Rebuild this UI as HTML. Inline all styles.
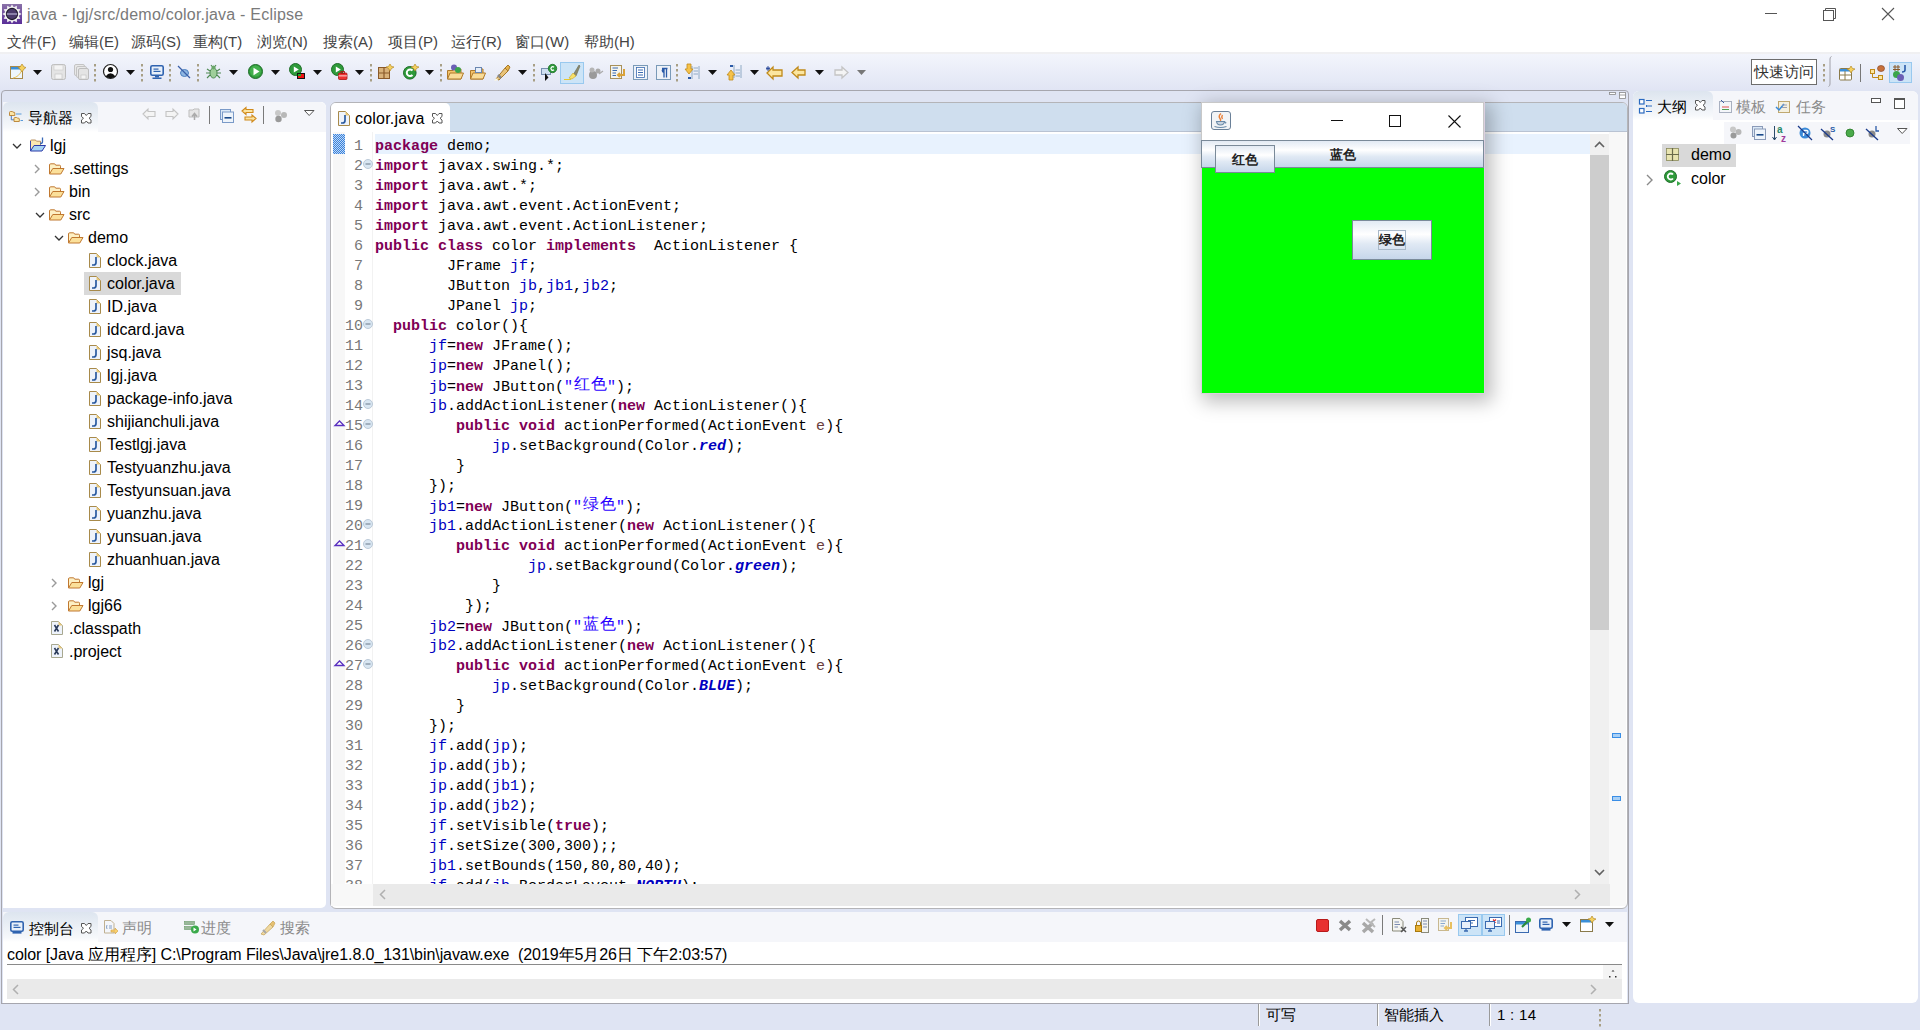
<!DOCTYPE html><html><head><meta charset="utf-8"><style>
*{margin:0;padding:0;box-sizing:border-box}
html,body{width:1920px;height:1030px;overflow:hidden;background:#dfe4f3;font-family:"Liberation Sans",sans-serif;font-size:15px;color:#000}
.a{position:absolute}
.t{position:absolute;white-space:pre;line-height:20px;letter-spacing:0;font-size:16px}
svg{position:absolute;overflow:visible}
.code{font-family:"Liberation Mono",monospace;font-size:15px;letter-spacing:0px;line-height:20px;white-space:pre;position:absolute;left:375px}
.k{color:#7f0055;font-weight:bold}
.f{color:#0000c0}
.s{color:#2a00ff}
.sf{color:#0000c0;font-weight:bold;font-style:italic}
.p{color:#6a3e3e}
.ln{color:#787878;font-family:"Liberation Sans",sans-serif;font-size:15px;line-height:20px;position:absolute;text-align:right;width:40px;left:322px}
</style></head><body>
<div class="a" style="left:0px;top:0px;width:1920px;height:28px;background:#fff"></div>
<svg style="left:2px;top:4px" width="20" height="20" viewBox="0 0 20 20"><defs><linearGradient id="eg" x1="0" y1="0" x2="0" y2="1"><stop offset="0" stop-color="#8a72a8"/><stop offset="1" stop-color="#5a2e98"/></linearGradient></defs><rect width="20" height="20" fill="url(#eg)"/><polygon points="10.00,0.40 11.81,3.24 14.80,1.69 14.95,5.05 18.31,5.20 16.76,8.19 19.60,10.00 16.76,11.81 18.31,14.80 14.95,14.95 14.80,18.31 11.81,16.76 10.00,19.60 8.19,16.76 5.20,18.31 5.05,14.95 1.69,14.80 3.24,11.81 0.40,10.00 3.24,8.19 1.69,5.20 5.05,5.05 5.20,1.69 8.19,3.24" fill="#f2f2f2"/><circle cx="10" cy="10" r="5.6" fill="#4a3a6a" stroke="#1e1a2a" stroke-width="1.1"/><rect x="4.8" y="9" width="10.4" height="2" fill="#8a80a8"/></svg>
<div class="t" style="left:27px;top:5px;color:#7a7a7a;font-size:16px;letter-spacing:0.22px">java - lgj/src/demo/color.java - Eclipse</div>
<div class="a" style="left:1765px;top:13px;width:12px;height:1px;background:#555"></div>
<svg style="left:1823px;top:8px" width="13" height="13" viewBox="0 0 13 13"><rect x="0.5" y="2.5" width="10" height="10" fill="none" stroke="#555"/><path d="M2.5 2.5V0.5H12.5V10.5H10.5" fill="none" stroke="#555"/></svg>
<svg style="left:1882px;top:8px" width="13" height="13" viewBox="0 0 13 13"><path d="M0 0L12 12M12 0L0 12" stroke="#555" stroke-width="1.1"/></svg>
<div class="a" style="left:0px;top:28px;width:1920px;height:24px;background:#fff"></div>
<div class="t" style="left:7px;top:32px;font-size:15px;letter-spacing:0px;color:#444">文件(F)</div>
<div class="t" style="left:69px;top:32px;font-size:15px;letter-spacing:0px;color:#444">编辑(E)</div>
<div class="t" style="left:131px;top:32px;font-size:15px;letter-spacing:0px;color:#444">源码(S)</div>
<div class="t" style="left:193px;top:32px;font-size:15px;letter-spacing:0px;color:#444">重构(T)</div>
<div class="t" style="left:257px;top:32px;font-size:15px;letter-spacing:0px;color:#444">浏览(N)</div>
<div class="t" style="left:323px;top:32px;font-size:15px;letter-spacing:0px;color:#444">搜索(A)</div>
<div class="t" style="left:388px;top:32px;font-size:15px;letter-spacing:0px;color:#444">项目(P)</div>
<div class="t" style="left:451px;top:32px;font-size:15px;letter-spacing:0px;color:#444">运行(R)</div>
<div class="t" style="left:515px;top:32px;font-size:15px;letter-spacing:0px;color:#444">窗口(W)</div>
<div class="t" style="left:584px;top:32px;font-size:15px;letter-spacing:0px;color:#444">帮助(H)</div>
<div class="a" style="left:0px;top:52px;width:1920px;height:2px;background:#f0f0f2"></div>
<div class="a" style="left:0px;top:54px;width:1920px;height:36px;background:linear-gradient(#f3f5fc,#e1e5f4)"></div>
<svg style="left:10px;top:64px" width="16" height="16" viewBox="0 0 16 16"><rect x="0.5" y="2.5" width="12" height="12" fill="#eef6fc" stroke="#a88a4a"/><rect x="1" y="3" width="11" height="2.5" fill="#3b8fd8"/><path d="M3 14 Q9 13 12 6" stroke="#e8c25a" fill="none"/><path d="M12 0 L14 3 L16 3.5 L14 5 L12 8 L10 5 L8 3.5 L10 3Z" fill="#f6d15e" stroke="#b68b2a" stroke-width="0.7"/></svg>
<svg style="left:33px;top:70px" width="10" height="6" viewBox="0 0 10 6"><path d="M0 0H9L4.5 5Z" fill="#111"/></svg>
<svg style="left:51px;top:64px" width="15" height="16" viewBox="0 0 15 16"><rect x="0.5" y="0.5" width="14" height="15" rx="2" fill="#e4e4e4" stroke="#bdbdbd"/><rect x="3" y="1" width="9" height="5" fill="#f4f4f4" stroke="#c8c8c8" stroke-width="0.6"/><rect x="4" y="10" width="7" height="5" fill="#f4f4f4" stroke="#c0c0c0" stroke-width="0.6"/></svg>
<svg style="left:74px;top:64px" width="15" height="16" viewBox="0 0 15 16"><rect x="0.5" y="0.5" width="10" height="11" rx="1.5" fill="#e8e8e8" stroke="#c4c4c4"/><rect x="2.5" y="2.5" width="10" height="11" rx="1.5" fill="#e8e8e8" stroke="#c4c4c4"/><rect x="4.5" y="4.5" width="10" height="11" rx="1.5" fill="#e4e4e4" stroke="#bdbdbd"/><rect x="7" y="11" width="5" height="4" fill="#f4f4f4" stroke="#c0c0c0" stroke-width="0.6"/></svg>
<svg style="left:94px;top:64px" width="3" height="20" viewBox="0 0 3 20"><rect x="0" y="0" width="2" height="2.5" fill="#a89f85"/><rect x="0" y="5" width="2" height="2.5" fill="#a89f85"/><rect x="0" y="10" width="2" height="2.5" fill="#a89f85"/><rect x="0" y="15" width="2" height="2.5" fill="#a89f85"/></svg>
<svg style="left:103px;top:64px" width="15" height="15" viewBox="0 0 15 15"><circle cx="7.5" cy="7.5" r="7" fill="#fff" stroke="#222" stroke-width="1.2"/><circle cx="7.5" cy="5.5" r="2.6" fill="#111"/><path d="M2.5 12.5 Q7.5 6 12.5 12.5 Q7.5 16 2.5 12.5Z" fill="#111"/></svg>
<svg style="left:126px;top:70px" width="10" height="6" viewBox="0 0 10 6"><path d="M0 0H9L4.5 5Z" fill="#111"/></svg>
<svg style="left:141px;top:64px" width="3" height="20" viewBox="0 0 3 20"><rect x="0" y="0" width="2" height="2.5" fill="#a89f85"/><rect x="0" y="5" width="2" height="2.5" fill="#a89f85"/><rect x="0" y="10" width="2" height="2.5" fill="#a89f85"/><rect x="0" y="15" width="2" height="2.5" fill="#a89f85"/></svg>
<svg style="left:150px;top:65px" width="14" height="14" viewBox="0 0 14 14"><rect x="0.8" y="0.8" width="12.4" height="9.4" rx="1.5" fill="#e8f0fa" stroke="#2f63b0" stroke-width="1.6"/><rect x="3.5" y="3.5" width="5" height="1.2" fill="#2f63b0"/><rect x="3.5" y="5.8" width="7" height="1.2" fill="#2f63b0"/><rect x="5" y="11" width="4" height="1.5" fill="#2f63b0"/><rect x="2.5" y="12.5" width="9" height="1.5" fill="#2f63b0"/></svg>
<svg style="left:169px;top:64px" width="3" height="20" viewBox="0 0 3 20"><rect x="0" y="0" width="2" height="2.5" fill="#a89f85"/><rect x="0" y="5" width="2" height="2.5" fill="#a89f85"/><rect x="0" y="10" width="2" height="2.5" fill="#a89f85"/><rect x="0" y="15" width="2" height="2.5" fill="#a89f85"/></svg>
<svg style="left:178px;top:66px" width="13" height="13" viewBox="0 0 13 13"><ellipse cx="6.5" cy="7" rx="4" ry="3.5" fill="#8fb7e2" stroke="#4a7fbf"/><path d="M0 0L12 12" stroke="#3a5fa8" stroke-width="1.3"/></svg>
<svg style="left:197px;top:64px" width="3" height="20" viewBox="0 0 3 20"><rect x="0" y="0" width="2" height="2.5" fill="#a89f85"/><rect x="0" y="5" width="2" height="2.5" fill="#a89f85"/><rect x="0" y="10" width="2" height="2.5" fill="#a89f85"/><rect x="0" y="15" width="2" height="2.5" fill="#a89f85"/></svg>
<svg style="left:206px;top:64px" width="15" height="16" viewBox="0 0 15 16"><ellipse cx="7.5" cy="9" rx="3.5" ry="5" fill="#9fcf9a" stroke="#4e8a52"/><circle cx="7.5" cy="3.5" r="2" fill="#6aa86a"/><path d="M1 5L4 7M14 5L11 7M0 9H4M15 9H11M1 14L4 11M14 14L11 11M5 1L6 2.5M10 1L9 2.5" stroke="#4e8a52" stroke-width="1.1"/></svg>
<svg style="left:229px;top:70px" width="10" height="6" viewBox="0 0 10 6"><path d="M0 0H9L4.5 5Z" fill="#111"/></svg>
<svg style="left:248px;top:64px" width="15" height="15" viewBox="0 0 15 15"><circle cx="7.5" cy="7.5" r="7" fill="#2e9a3a" stroke="#1e6e28"/><circle cx="7.5" cy="7" r="5.5" fill="#43b04d"/><path d="M5.5 3.8V11.2L11.5 7.5Z" fill="#fff"/></svg>
<svg style="left:271px;top:70px" width="10" height="6" viewBox="0 0 10 6"><path d="M0 0H9L4.5 5Z" fill="#111"/></svg>
<svg style="left:289px;top:63px" width="17" height="17" viewBox="0 0 17 17"><circle cx="6.5" cy="6.5" r="6" fill="#2e9a3a" stroke="#1e6e28"/><path d="M4.8 3.5V9.5L9.8 6.5Z" fill="#fff"/><rect x="8" y="10" width="8" height="6" fill="#111"/><rect x="9" y="11" width="6" height="4" fill="#e11"/><rect x="9" y="11" width="3" height="2" fill="#2a2"/></svg>
<svg style="left:313px;top:70px" width="10" height="6" viewBox="0 0 10 6"><path d="M0 0H9L4.5 5Z" fill="#111"/></svg>
<svg style="left:331px;top:63px" width="17" height="17" viewBox="0 0 17 17"><circle cx="6.5" cy="6.5" r="6" fill="#2e9a3a" stroke="#1e6e28"/><path d="M4.8 3.5V9.5L9.8 6.5Z" fill="#fff"/><rect x="7.5" y="10" width="8.5" height="6.5" rx="1" fill="#e33" stroke="#a11" stroke-width="0.8"/><rect x="10" y="8.5" width="3.5" height="2" fill="none" stroke="#a11" stroke-width="0.8"/><rect x="7.5" y="12.5" width="8.5" height="0.8" fill="#fff"/></svg>
<svg style="left:355px;top:70px" width="10" height="6" viewBox="0 0 10 6"><path d="M0 0H9L4.5 5Z" fill="#111"/></svg>
<svg style="left:370px;top:64px" width="3" height="20" viewBox="0 0 3 20"><rect x="0" y="0" width="2" height="2.5" fill="#a89f85"/><rect x="0" y="5" width="2" height="2.5" fill="#a89f85"/><rect x="0" y="10" width="2" height="2.5" fill="#a89f85"/><rect x="0" y="15" width="2" height="2.5" fill="#a89f85"/></svg>
<svg style="left:378px;top:64px" width="16" height="16" viewBox="0 0 16 16"><rect x="0.5" y="3.5" width="11" height="11" fill="#d9b27a" stroke="#8a5a2a"/><path d="M6 3V15M0 9H12" stroke="#8a5a2a" stroke-width="1.2"/><path d="M12 0 L13.5 2.5 L16 3 L13.5 4.5 L12 7 L10.5 4.5 L8 3 L10.5 2.5Z" fill="#f6d15e" stroke="#b68b2a" stroke-width="0.7"/></svg>
<svg style="left:403px;top:64px" width="16" height="16" viewBox="0 0 16 16"><circle cx="6.8" cy="8.8" r="6.3" fill="#2e9a3a" stroke="#1e6e28"/><path d="M9.5 6.5 A3.3 3.3 0 1 0 9.5 11" stroke="#fff" stroke-width="2" fill="none"/><path d="M12 0 L13.5 2.5 L16 3 L13.5 4.5 L12 7 L10.5 4.5 L8 3 L10.5 2.5Z" fill="#f6d15e" stroke="#b68b2a" stroke-width="0.7"/></svg>
<svg style="left:425px;top:70px" width="10" height="6" viewBox="0 0 10 6"><path d="M0 0H9L4.5 5Z" fill="#111"/></svg>
<svg style="left:440px;top:64px" width="3" height="20" viewBox="0 0 3 20"><rect x="0" y="0" width="2" height="2.5" fill="#a89f85"/><rect x="0" y="5" width="2" height="2.5" fill="#a89f85"/><rect x="0" y="10" width="2" height="2.5" fill="#a89f85"/><rect x="0" y="15" width="2" height="2.5" fill="#a89f85"/></svg>
<svg style="left:447px;top:64px" width="17" height="16" viewBox="0 0 17 16"><path d="M0.5 6.5H6L7 5H14V15H0.5Z" fill="#f3c36b" stroke="#b07a2a"/><path d="M0.5 15L3 9H16.5L14 15Z" fill="#f9dc98" stroke="#b07a2a"/><circle cx="7" cy="3.5" r="3" fill="#6b5fb5"/><circle cx="11" cy="6" r="3" fill="#3aa54a"/></svg>
<svg style="left:470px;top:65px" width="16" height="15" viewBox="0 0 16 15"><path d="M0.5 5.5H5L6 4H13V14H0.5Z" fill="#f3c36b" stroke="#b07a2a"/><path d="M0.5 14L3 8H15.5L13 14Z" fill="#f9dc98" stroke="#b07a2a"/><rect x="5.5" y="2.5" width="6" height="5" fill="#e6eef8" stroke="#6a86b0"/></svg>
<svg style="left:494px;top:64px" width="17" height="17" viewBox="0 0 17 17"><path d="M2 15 L11 4 L14 7 L5 16Z" fill="#e9c47a" stroke="#a77a2a"/><path d="M11 4L14 1L16 3L14 7Z" fill="#e6b24a" stroke="#a77a2a"/><path d="M4 11L7 14" stroke="#888" stroke-width="2.5"/><path d="M0 17L3 14L4 16Z" fill="#fffbe0"/></svg>
<svg style="left:518px;top:70px" width="10" height="6" viewBox="0 0 10 6"><path d="M0 0H9L4.5 5Z" fill="#111"/></svg>
<svg style="left:533px;top:64px" width="3" height="20" viewBox="0 0 3 20"><rect x="0" y="0" width="2" height="2.5" fill="#a89f85"/><rect x="0" y="5" width="2" height="2.5" fill="#a89f85"/><rect x="0" y="10" width="2" height="2.5" fill="#a89f85"/><rect x="0" y="15" width="2" height="2.5" fill="#a89f85"/></svg>
<svg style="left:541px;top:64px" width="16" height="17" viewBox="0 0 16 17"><rect x="0.5" y="4.5" width="9" height="6" fill="#cfdff0" stroke="#7890b0"/><path d="M4 9V17L7.5 13.5Z" fill="#111"/><circle cx="11.5" cy="4.5" r="4.2" fill="#2e9a3a" stroke="#1e6e28" stroke-width="0.8"/><path d="M13 3.2A1.8 1.8 0 1 0 13 5.8" stroke="#fff" stroke-width="1.2" fill="none"/></svg>
<div class="a" style="left:560px;top:62px;width:24px;height:22px;background:#cce4f7;border:1px solid #99c9ef"></div>
<svg style="left:564px;top:64px" width="16" height="16" viewBox="0 0 16 16"><path d="M9 11L15 1L16 2L12 12Z" fill="#8a8a70" stroke="#6b6b50" stroke-width="0.6"/><path d="M5 14L9 9L12 12L8 15Z" fill="#f6e06a" stroke="#c9a82a" stroke-width="0.6"/><path d="M0 15.5H7" stroke="#e8c82a" stroke-width="1"/></svg>
<svg style="left:588px;top:66px" width="16" height="13" viewBox="0 0 16 13"><circle cx="5" cy="9" r="4" fill="#9a9a9a"/><circle cx="4" cy="4" r="2.5" fill="#b5b5b5"/><circle cx="10" cy="5" r="2.5" fill="#aaa"/><path d="M11 8L15 5" stroke="#aaa" stroke-width="1.2"/></svg>
<svg style="left:610px;top:64px" width="16" height="16" viewBox="0 0 16 16"><rect x="0.5" y="1.5" width="11" height="13" fill="#f4f4ee" stroke="#a8905a"/><path d="M2.5 4H8M2.5 6.5H7M2.5 9H6M2.5 11.5H6" stroke="#3a6ab0"/><path d="M14 5V11H8M10 9L8 11L10 13" stroke="#d9a23a" stroke-width="2" fill="none"/></svg>
<svg style="left:633px;top:65px" width="15" height="15" viewBox="0 0 15 15"><rect x="0.5" y="0.5" width="14" height="14" fill="#eef2f8" stroke="#7a9ab8"/><rect x="3.5" y="2.5" width="8" height="10" fill="#fff" stroke="#3a6ab0" stroke-width="0.8"/><path d="M5 5H10M5 7.5H10M5 10H10" stroke="#3a6ab0"/></svg>
<svg style="left:656px;top:65px" width="15" height="15" viewBox="0 0 15 15"><rect x="0.5" y="0.5" width="14" height="14" fill="#eef2f8" stroke="#7a9ab8"/><path d="M8 3.5V12.5M10.5 3.5V12.5M6 3.5H11.5" stroke="#2a5aa8" stroke-width="1.3" fill="none"/><path d="M8 3.2A2.4 2.4 0 0 0 8 8Z" fill="#2a5aa8"/></svg>
<svg style="left:676px;top:64px" width="3" height="20" viewBox="0 0 3 20"><rect x="0" y="0" width="2" height="2.5" fill="#a89f85"/><rect x="0" y="5" width="2" height="2.5" fill="#a89f85"/><rect x="0" y="10" width="2" height="2.5" fill="#a89f85"/><rect x="0" y="15" width="2" height="2.5" fill="#a89f85"/></svg>
<svg style="left:685px;top:64px" width="15" height="16" viewBox="0 0 15 16"><path d="M7 2V15M14 2V15" stroke="#7a9ab8" stroke-width="0.8"/><path d="M8.5 4H13M8.5 7H13M8.5 10H13" stroke="#7a9ab8" stroke-width="0.8"/><rect x="3" y="13" width="3" height="2" fill="#2a5aa8"/><path d="M2 0H6V5H8L4 10L0 5H2Z" fill="#f6c24a" stroke="#c08a1a" stroke-width="0.8"/></svg>
<svg style="left:708px;top:70px" width="10" height="6" viewBox="0 0 10 6"><path d="M0 0H9L4.5 5Z" fill="#111"/></svg>
<svg style="left:727px;top:64px" width="15" height="16" viewBox="0 0 15 16"><path d="M7 1V14M14 1V14" stroke="#7a9ab8" stroke-width="0.8"/><path d="M8.5 6H13M8.5 9H13M8.5 12H13" stroke="#7a9ab8" stroke-width="0.8"/><rect x="3" y="1" width="3" height="2" fill="#2a5aa8"/><path d="M2 16H6V11H8L4 6L0 11H2Z" fill="#f6c24a" stroke="#c08a1a" stroke-width="0.8"/></svg>
<svg style="left:750px;top:70px" width="10" height="6" viewBox="0 0 10 6"><path d="M0 0H9L4.5 5Z" fill="#111"/></svg>
<svg style="left:766px;top:66px" width="17" height="13" viewBox="0 0 17 13"><path d="M1 7L7 1V4H16V10H7V13Z" fill="#fbe6a0" stroke="#c08a1a" stroke-width="1.3"/><path d="M2 0L2 5M0 2.5H4M0.5 1L3.5 4M3.5 1L0.5 4" stroke="#2a4a9a" stroke-width="0.9"/></svg>
<svg style="left:791px;top:66px" width="15" height="13" viewBox="0 0 15 13"><path d="M1 6.5L7 1V4H14V9H7V12Z" fill="#fbe6a0" stroke="#c08a1a" stroke-width="1.3"/></svg>
<svg style="left:815px;top:70px" width="10" height="6" viewBox="0 0 10 6"><path d="M0 0H9L4.5 5Z" fill="#111"/></svg>
<svg style="left:834px;top:66px" width="15" height="13" viewBox="0 0 15 13"><path d="M14 6.5L8 1V4H1V9H8V12Z" fill="#f4f4f4" stroke="#c4c4c4" stroke-width="1.3"/></svg>
<svg style="left:857px;top:70px" width="10" height="6" viewBox="0 0 10 6"><path d="M0 0H9L4.5 5Z" fill="#777"/></svg>
<div class="a" style="left:1751px;top:59px;width:66px;height:26px;background:#fff;border:1px solid #6d6d6d"></div>
<div class="t" style="left:1754px;top:62px;color:#333;font-size:15px;letter-spacing:0px">快速访问</div>
<svg style="left:1823px;top:64px" width="3" height="20" viewBox="0 0 3 20"><rect x="0" y="0" width="2" height="2.5" fill="#a89f85"/><rect x="0" y="5" width="2" height="2.5" fill="#a89f85"/><rect x="0" y="10" width="2" height="2.5" fill="#a89f85"/><rect x="0" y="15" width="2" height="2.5" fill="#a89f85"/></svg>
<svg style="left:1828px;top:56px" width="4" height="31" viewBox="0 0 4 31"><path d="M3.5 0.5Q2 1 2 3V28Q2 30 0.5 30.5" stroke="#a0a0a8" fill="none"/></svg>
<svg style="left:1839px;top:66px" width="15" height="15" viewBox="0 0 15 15"><rect x="0.5" y="2.5" width="12" height="11.5" rx="1" fill="#fff" stroke="#8a7a4a"/><rect x="1" y="3" width="11" height="2.5" fill="#3b8fd8"/><path d="M6 5V14M1 9H12" stroke="#8a7a4a"/><path d="M12 0 L13.5 2.5 L16 3 L13.5 4.5 L12 7 L10.5 4.5 L8 3 L10.5 2.5Z" fill="#f6d15e" stroke="#b68b2a" stroke-width="0.7"/></svg>
<div class="a" style="left:1860px;top:64px;width:1px;height:18px;background:#777"></div>
<svg style="left:1870px;top:65px" width="15" height="16" viewBox="0 0 15 16"><rect x="0.5" y="4.5" width="4" height="4" fill="#fbe6a0" stroke="#c08a1a"/><rect x="8.5" y="10.5" width="4" height="4" fill="#fbe6a0" stroke="#c08a1a"/><path d="M2.5 8.5V12.5H8.5" stroke="#c08a1a" fill="none"/><ellipse cx="11" cy="3.5" rx="3.5" ry="3" fill="#c8703a" stroke="#8a4a2a" stroke-width="0.7"/></svg>
<div class="a" style="left:1889px;top:62px;width:23px;height:21px;background:#cce4f7;border:1px solid #99c9ef"></div>
<svg style="left:1892px;top:65px" width="17" height="16" viewBox="0 0 17 16"><path d="M3 0V6M6 0V6M1 2H8M1 4.5H8" stroke="#8a5a2a" stroke-width="1"/><path d="M13 0V5Q13 7 10 7" stroke="#2a5aa8" stroke-width="1.6" fill="none"/><circle cx="4.5" cy="9.5" r="3.5" fill="#3aa54a"/><circle cx="8.5" cy="12.5" r="3.5" fill="#6b5fb5"/></svg>
<div class="a" style="left:1px;top:90px;width:1628px;height:914px;border:1px solid #a6a6ae;border-radius:4px 4px 0 0;background:#dfe4f3"></div>
<div class="a" style="left:3px;top:102px;width:323px;height:806px;background:#fff;border-radius:5px 5px 5px 0"></div>
<div class="a" style="left:3px;top:102px;width:323px;height:30px;background:#f5f6fa;border-radius:0 6px 0 0"></div>
<div class="a" style="left:3px;top:102px;width:95px;height:30px;background:linear-gradient(#dde5ef,#f6f8fb 85%,#fff);border-radius:6px 6px 0 0"></div>
<svg style="left:9px;top:111px" width="15" height="12" viewBox="0 0 15 12"><path d="M2.3 4V8.8H5" stroke="#4a7ac0" fill="none"/><path d="M0.5 4.5V1.5Q0.5 0.5 1.5 0.5H3Q3.8 0.5 4 1.2H5Q5.8 1.2 5.8 2V4.5Z" fill="#fbe6a8" stroke="#b88030" stroke-width="0.9"/><path d="M5 10.5V7.5Q5 6.5 6 6.5H7.5Q8.3 6.5 8.5 7.2H9.5Q10.3 7.2 10.3 8V10.5Z" fill="#fbe6a8" stroke="#b88030" stroke-width="0.9"/><path d="M7 3H12.5M11.5 9.5H14" stroke="#5a9ad8" stroke-width="1"/></svg>
<div class="t" style="left:28px;top:108px;font-size:15px;letter-spacing:0px">导航器</div>
<svg style="left:81px;top:113px" width="11" height="11" viewBox="0 0 11 11"><polygon points="0.5,0.5 3.5,0.5 5.25,2.5 7,0.5 10,0.5 10,3.5 8,5.25 10,7 10,10 7,10 5.25,8 3.5,10 0.5,10 0.5,7 2.5,5.25 0.5,3.5" fill="#fff" stroke="#555" stroke-width="1"/></svg>
<svg style="left:142px;top:108px" width="14" height="12" viewBox="0 0 14 12"><path d="M1 6L6 1V3.5H13V8.5H6V11Z" fill="#f4f4f4" stroke="#c4c4c4" stroke-width="1.1"/></svg>
<svg style="left:165px;top:108px" width="14" height="12" viewBox="0 0 14 12"><path d="M13 6L8 1V3.5H1V8.5H8V11Z" fill="#f4f4f4" stroke="#c4c4c4" stroke-width="1.1"/></svg>
<svg style="left:188px;top:107px" width="13" height="14" viewBox="0 0 13 14"><path d="M1 3H5L6 2H11V10H1Z" fill="#e6e6e6" stroke="#bdbdbd"/><path d="M6.5 13V8M4 9.5L6.5 6.5L9 9.5" stroke="#aaa" stroke-width="1.5" fill="none"/></svg>
<div class="a" style="left:209px;top:106px;width:1px;height:18px;background:#7a7a7a"></div>
<svg style="left:220px;top:109px" width="14" height="14" viewBox="0 0 14 14"><rect x="0.5" y="0.5" width="10" height="10" fill="#dbe8f6" stroke="#7a9ac8"/><rect x="2.5" y="3" width="11" height="10.5" fill="#eef4fb" stroke="#7a9ac8"/><rect x="4.5" y="8" width="7" height="1.6" fill="#1a4a8a"/></svg>
<svg style="left:241px;top:107px" width="16" height="16" viewBox="0 0 16 16"><path d="M1 4L5 0.5V2.5H12V5.5H5V7.5Z" fill="#fbe3a0" stroke="#d08a1a" stroke-width="1.1"/><path d="M15 11.5L11 8V10H4V13H11V15Z" fill="#fbe3a0" stroke="#d08a1a" stroke-width="1.1"/></svg>
<div class="a" style="left:263px;top:106px;width:1px;height:18px;background:#7a7a7a"></div>
<svg style="left:274px;top:109px" width="14" height="14" viewBox="0 0 14 14"><circle cx="4" cy="4" r="3" fill="#c8c8c8"/><circle cx="10" cy="6" r="3" fill="#b8b8b8"/><circle cx="4.5" cy="10" r="3.2" fill="#9a9a9a"/></svg>
<svg style="left:304px;top:110px" width="11" height="6" viewBox="0 0 11 6"><path d="M0.5 0.5H10L5.2 5.5Z" fill="#fff" stroke="#555" stroke-width="1"/></svg>
<svg style="left:12px;top:143px" width="10" height="7" viewBox="0 0 10 7"><path d="M1 1L5 5L9 1" stroke="#333" stroke-width="1.3" fill="none"/></svg>
<svg style="left:29px;top:137px" width="17" height="15" viewBox="0 0 17 15"><path d="M1.5 14V4Q1.5 3 2.5 3H6Q7 3 7.5 4.2H11.5V8.5" fill="#fbe8b0" stroke="#b89060"/><path d="M1.5 4V14" stroke="#3a4ab0"/><path d="M1.5 14L5 8.5H16.5L13 14Z" fill="#a8d4f4" stroke="#2a3aa8"/><path d="M13.5 0.5V4.8Q13.5 6.5 11.8 6.5H11" stroke="#3a6ab8" stroke-width="1.3" fill="none"/></svg>
<div class="t" style="left:50px;top:136px;">lgj</div>
<svg style="left:34px;top:164px" width="7" height="10" viewBox="0 0 7 10"><path d="M1 1L5 5L1 9" stroke="#9a9a9a" stroke-width="1.4" fill="none"/></svg>
<svg style="left:49px;top:163px" width="16" height="12" viewBox="0 0 16 12"><path d="M0.5 11V2Q0.5 0.8 1.7 0.8H5.3Q6.2 0.8 6.7 2.2H10.5Q11.5 2.2 11.5 3.2V5.5" fill="#fdf0c4" stroke="#c07830"/><path d="M0.5 11L3.8 5.5H15L11.8 11Z" fill="#fbe09a" stroke="#c07830"/></svg>
<div class="t" style="left:69px;top:159px;">.settings</div>
<svg style="left:34px;top:187px" width="7" height="10" viewBox="0 0 7 10"><path d="M1 1L5 5L1 9" stroke="#9a9a9a" stroke-width="1.4" fill="none"/></svg>
<svg style="left:49px;top:186px" width="16" height="12" viewBox="0 0 16 12"><path d="M0.5 11V2Q0.5 0.8 1.7 0.8H5.3Q6.2 0.8 6.7 2.2H10.5Q11.5 2.2 11.5 3.2V5.5" fill="#fdf0c4" stroke="#c07830"/><path d="M0.5 11L3.8 5.5H15L11.8 11Z" fill="#fbe09a" stroke="#c07830"/></svg>
<div class="t" style="left:69px;top:182px;">bin</div>
<svg style="left:35px;top:212px" width="10" height="7" viewBox="0 0 10 7"><path d="M1 1L5 5L9 1" stroke="#333" stroke-width="1.3" fill="none"/></svg>
<svg style="left:49px;top:209px" width="16" height="12" viewBox="0 0 16 12"><path d="M0.5 11V2Q0.5 0.8 1.7 0.8H5.3Q6.2 0.8 6.7 2.2H10.5Q11.5 2.2 11.5 3.2V5.5" fill="#fdf0c4" stroke="#c07830"/><path d="M0.5 11L3.8 5.5H15L11.8 11Z" fill="#fbe09a" stroke="#c07830"/></svg>
<div class="t" style="left:69px;top:205px;">src</div>
<svg style="left:54px;top:235px" width="10" height="7" viewBox="0 0 10 7"><path d="M1 1L5 5L9 1" stroke="#333" stroke-width="1.3" fill="none"/></svg>
<svg style="left:68px;top:232px" width="16" height="12" viewBox="0 0 16 12"><path d="M0.5 11V2Q0.5 0.8 1.7 0.8H5.3Q6.2 0.8 6.7 2.2H10.5Q11.5 2.2 11.5 3.2V5.5" fill="#fdf0c4" stroke="#c07830"/><path d="M0.5 11L3.8 5.5H15L11.8 11Z" fill="#fbe09a" stroke="#c07830"/></svg>
<div class="t" style="left:88px;top:228px;">demo</div>
<svg style="left:89px;top:253px" width="12" height="15" viewBox="0 0 12 15"><path d="M0.5 0.5H7.5L11.5 4.5V14.5H0.5Z" fill="#eef3fb" stroke="#a88a4a"/><path d="M7.5 0.5V4.5H11.5Z" fill="#e8c878"/><path d="M7 4V9.5Q7 12 4.5 12H3" stroke="#2a5aa0" stroke-width="1.7" fill="none"/></svg>
<div class="t" style="left:107px;top:251px;">clock.java</div>
<div class="a" style="left:84px;top:272px;width:97px;height:23px;background:#d9d9d9"></div>
<svg style="left:89px;top:276px" width="12" height="15" viewBox="0 0 12 15"><path d="M0.5 0.5H7.5L11.5 4.5V14.5H0.5Z" fill="#eef3fb" stroke="#a88a4a"/><path d="M7.5 0.5V4.5H11.5Z" fill="#e8c878"/><path d="M7 4V9.5Q7 12 4.5 12H3" stroke="#2a5aa0" stroke-width="1.7" fill="none"/></svg>
<div class="t" style="left:107px;top:274px;">color.java</div>
<svg style="left:89px;top:299px" width="12" height="15" viewBox="0 0 12 15"><path d="M0.5 0.5H7.5L11.5 4.5V14.5H0.5Z" fill="#eef3fb" stroke="#a88a4a"/><path d="M7.5 0.5V4.5H11.5Z" fill="#e8c878"/><path d="M7 4V9.5Q7 12 4.5 12H3" stroke="#2a5aa0" stroke-width="1.7" fill="none"/></svg>
<div class="t" style="left:107px;top:297px;">ID.java</div>
<svg style="left:89px;top:322px" width="12" height="15" viewBox="0 0 12 15"><path d="M0.5 0.5H7.5L11.5 4.5V14.5H0.5Z" fill="#eef3fb" stroke="#a88a4a"/><path d="M7.5 0.5V4.5H11.5Z" fill="#e8c878"/><path d="M7 4V9.5Q7 12 4.5 12H3" stroke="#2a5aa0" stroke-width="1.7" fill="none"/></svg>
<div class="t" style="left:107px;top:320px;">idcard.java</div>
<svg style="left:89px;top:345px" width="12" height="15" viewBox="0 0 12 15"><path d="M0.5 0.5H7.5L11.5 4.5V14.5H0.5Z" fill="#eef3fb" stroke="#a88a4a"/><path d="M7.5 0.5V4.5H11.5Z" fill="#e8c878"/><path d="M7 4V9.5Q7 12 4.5 12H3" stroke="#2a5aa0" stroke-width="1.7" fill="none"/></svg>
<div class="t" style="left:107px;top:343px;">jsq.java</div>
<svg style="left:89px;top:368px" width="12" height="15" viewBox="0 0 12 15"><path d="M0.5 0.5H7.5L11.5 4.5V14.5H0.5Z" fill="#eef3fb" stroke="#a88a4a"/><path d="M7.5 0.5V4.5H11.5Z" fill="#e8c878"/><path d="M7 4V9.5Q7 12 4.5 12H3" stroke="#2a5aa0" stroke-width="1.7" fill="none"/></svg>
<div class="t" style="left:107px;top:366px;">lgj.java</div>
<svg style="left:89px;top:391px" width="12" height="15" viewBox="0 0 12 15"><path d="M0.5 0.5H7.5L11.5 4.5V14.5H0.5Z" fill="#eef3fb" stroke="#a88a4a"/><path d="M7.5 0.5V4.5H11.5Z" fill="#e8c878"/><path d="M7 4V9.5Q7 12 4.5 12H3" stroke="#2a5aa0" stroke-width="1.7" fill="none"/></svg>
<div class="t" style="left:107px;top:389px;">package-info.java</div>
<svg style="left:89px;top:414px" width="12" height="15" viewBox="0 0 12 15"><path d="M0.5 0.5H7.5L11.5 4.5V14.5H0.5Z" fill="#eef3fb" stroke="#a88a4a"/><path d="M7.5 0.5V4.5H11.5Z" fill="#e8c878"/><path d="M7 4V9.5Q7 12 4.5 12H3" stroke="#2a5aa0" stroke-width="1.7" fill="none"/></svg>
<div class="t" style="left:107px;top:412px;">shijianchuli.java</div>
<svg style="left:89px;top:437px" width="12" height="15" viewBox="0 0 12 15"><path d="M0.5 0.5H7.5L11.5 4.5V14.5H0.5Z" fill="#eef3fb" stroke="#a88a4a"/><path d="M7.5 0.5V4.5H11.5Z" fill="#e8c878"/><path d="M7 4V9.5Q7 12 4.5 12H3" stroke="#2a5aa0" stroke-width="1.7" fill="none"/></svg>
<div class="t" style="left:107px;top:435px;">Testlgj.java</div>
<svg style="left:89px;top:460px" width="12" height="15" viewBox="0 0 12 15"><path d="M0.5 0.5H7.5L11.5 4.5V14.5H0.5Z" fill="#eef3fb" stroke="#a88a4a"/><path d="M7.5 0.5V4.5H11.5Z" fill="#e8c878"/><path d="M7 4V9.5Q7 12 4.5 12H3" stroke="#2a5aa0" stroke-width="1.7" fill="none"/></svg>
<div class="t" style="left:107px;top:458px;">Testyuanzhu.java</div>
<svg style="left:89px;top:483px" width="12" height="15" viewBox="0 0 12 15"><path d="M0.5 0.5H7.5L11.5 4.5V14.5H0.5Z" fill="#eef3fb" stroke="#a88a4a"/><path d="M7.5 0.5V4.5H11.5Z" fill="#e8c878"/><path d="M7 4V9.5Q7 12 4.5 12H3" stroke="#2a5aa0" stroke-width="1.7" fill="none"/></svg>
<div class="t" style="left:107px;top:481px;">Testyunsuan.java</div>
<svg style="left:89px;top:506px" width="12" height="15" viewBox="0 0 12 15"><path d="M0.5 0.5H7.5L11.5 4.5V14.5H0.5Z" fill="#eef3fb" stroke="#a88a4a"/><path d="M7.5 0.5V4.5H11.5Z" fill="#e8c878"/><path d="M7 4V9.5Q7 12 4.5 12H3" stroke="#2a5aa0" stroke-width="1.7" fill="none"/></svg>
<div class="t" style="left:107px;top:504px;">yuanzhu.java</div>
<svg style="left:89px;top:529px" width="12" height="15" viewBox="0 0 12 15"><path d="M0.5 0.5H7.5L11.5 4.5V14.5H0.5Z" fill="#eef3fb" stroke="#a88a4a"/><path d="M7.5 0.5V4.5H11.5Z" fill="#e8c878"/><path d="M7 4V9.5Q7 12 4.5 12H3" stroke="#2a5aa0" stroke-width="1.7" fill="none"/></svg>
<div class="t" style="left:107px;top:527px;">yunsuan.java</div>
<svg style="left:89px;top:552px" width="12" height="15" viewBox="0 0 12 15"><path d="M0.5 0.5H7.5L11.5 4.5V14.5H0.5Z" fill="#eef3fb" stroke="#a88a4a"/><path d="M7.5 0.5V4.5H11.5Z" fill="#e8c878"/><path d="M7 4V9.5Q7 12 4.5 12H3" stroke="#2a5aa0" stroke-width="1.7" fill="none"/></svg>
<div class="t" style="left:107px;top:550px;">zhuanhuan.java</div>
<svg style="left:51px;top:578px" width="7" height="10" viewBox="0 0 7 10"><path d="M1 1L5 5L1 9" stroke="#9a9a9a" stroke-width="1.4" fill="none"/></svg>
<svg style="left:68px;top:577px" width="16" height="12" viewBox="0 0 16 12"><path d="M0.5 11V2Q0.5 0.8 1.7 0.8H5.3Q6.2 0.8 6.7 2.2H10.5Q11.5 2.2 11.5 3.2V5.5" fill="#fdf0c4" stroke="#c07830"/><path d="M0.5 11L3.8 5.5H15L11.8 11Z" fill="#fbe09a" stroke="#c07830"/></svg>
<div class="t" style="left:88px;top:573px;">lgj</div>
<svg style="left:51px;top:601px" width="7" height="10" viewBox="0 0 7 10"><path d="M1 1L5 5L1 9" stroke="#9a9a9a" stroke-width="1.4" fill="none"/></svg>
<svg style="left:68px;top:600px" width="16" height="12" viewBox="0 0 16 12"><path d="M0.5 11V2Q0.5 0.8 1.7 0.8H5.3Q6.2 0.8 6.7 2.2H10.5Q11.5 2.2 11.5 3.2V5.5" fill="#fdf0c4" stroke="#c07830"/><path d="M0.5 11L3.8 5.5H15L11.8 11Z" fill="#fbe09a" stroke="#c07830"/></svg>
<div class="t" style="left:88px;top:596px;">lgj66</div>
<svg style="left:51px;top:621px" width="12" height="15" viewBox="0 0 12 15"><path d="M0.5 0.5H7.5L11.5 4.5V13.5H0.5Z" fill="#eef3fb" stroke="#a8a890"/><path d="M7.5 0.5V4.5H11.5Z" fill="#e8c878"/><path d="M3.5 4L7.5 10.5M7.5 4L3.5 10.5" stroke="#2a3a5a" stroke-width="1.6"/></svg>
<div class="t" style="left:69px;top:619px;">.classpath</div>
<svg style="left:51px;top:644px" width="12" height="15" viewBox="0 0 12 15"><path d="M0.5 0.5H7.5L11.5 4.5V13.5H0.5Z" fill="#eef3fb" stroke="#a8a890"/><path d="M7.5 0.5V4.5H11.5Z" fill="#e8c878"/><path d="M3.5 4L7.5 10.5M7.5 4L3.5 10.5" stroke="#2a3a5a" stroke-width="1.6"/></svg>
<div class="t" style="left:69px;top:642px;">.project</div>
<div class="a" style="left:330px;top:102px;width:1298px;height:807px;background:#fff;border:1px solid #b4b4b8;border-radius:6px"></div>
<div class="a" style="left:331px;top:103px;width:1296px;height:29px;background:#cfdeee;border-radius:5px 5px 0 0;border-bottom:1px solid #b9c3d3"></div>
<div class="a" style="left:331px;top:103px;width:119px;height:29px;background:#fff;border-radius:5px 5px 0 0"></div>
<svg style="left:338px;top:111px" width="12" height="15" viewBox="0 0 12 15"><path d="M0.5 0.5H7.5L11.5 4.5V14.5H0.5Z" fill="#eef3fb" stroke="#a88a4a"/><path d="M7.5 0.5V4.5H11.5Z" fill="#e8c878"/><path d="M7 4V9.5Q7 12 4.5 12H3" stroke="#2a5aa0" stroke-width="1.7" fill="none"/></svg>
<div class="t" style="left:355px;top:109px;letter-spacing:0.2px">color.java</div>
<svg style="left:432px;top:113px" width="11" height="11" viewBox="0 0 11 11"><polygon points="0.5,0.5 3.5,0.5 5.25,2.5 7,0.5 10,0.5 10,3.5 8,5.25 10,7 10,10 7,10 5.25,8 3.5,10 0.5,10 0.5,7 2.5,5.25 0.5,3.5" fill="#fff" stroke="#555" stroke-width="1"/></svg>
<svg style="left:1609px;top:92px" width="7" height="3" viewBox="0 0 7 3"><rect x="0.5" y="0.5" width="6" height="2" fill="#fff" stroke="#888" stroke-width="0.8"/></svg>
<svg style="left:1619px;top:92px" width="7" height="7" viewBox="0 0 7 7"><rect x="0.5" y="0.5" width="6" height="6" fill="#fff" stroke="#888" stroke-width="0.8"/><path d="M0.5 3H6.5" stroke="#888" stroke-width="0.8"/></svg>
<div class="a" style="left:331px;top:132px;width:42px;height:752px;background:#fff"></div>
<div class="a" style="left:333px;top:132px;width:12px;height:752px;background:#f7f7f7"></div>
<div class="a" style="left:372px;top:132px;width:1px;height:752px;background:#f2f2f2"></div>
<svg style="left:333px;top:134px" width="12" height="20"><defs><pattern id="chk" width="2" height="2" patternUnits="userSpaceOnUse"><rect width="2" height="2" fill="#fff"/><rect width="1" height="1" fill="#2f7bd9"/><rect x="1" y="1" width="1" height="1" fill="#2f7bd9"/></pattern></defs><rect width="12" height="20" fill="url(#chk)"/><rect x="0" y="0" width="12" height="20" fill="#4a90e2" opacity="0.35"/></svg>
<div class="a" style="left:375px;top:134px;width:1215px;height:20px;background:#e8f2fe"></div>
<div class="a" style="left:331px;top:132px;width:1259px;height:752px;overflow:hidden">
<div class="code" style="left:23px;top:5px;color:#787878">1</div>
<div class="code" style="left:44px;top:5px"><span class="k">package</span> demo;</div>
<div class="code" style="left:23px;top:25px;color:#787878">2</div>
<div class="code" style="left:44px;top:25px"><span class="k">import</span> javax.swing.*;</div>
<div class="code" style="left:23px;top:45px;color:#787878">3</div>
<div class="code" style="left:44px;top:45px"><span class="k">import</span> java.awt.*;</div>
<div class="code" style="left:23px;top:65px;color:#787878">4</div>
<div class="code" style="left:44px;top:65px"><span class="k">import</span> java.awt.event.ActionEvent;</div>
<div class="code" style="left:23px;top:85px;color:#787878">5</div>
<div class="code" style="left:44px;top:85px"><span class="k">import</span> java.awt.event.ActionListener;</div>
<div class="code" style="left:23px;top:105px;color:#787878">6</div>
<div class="code" style="left:44px;top:105px"><span class="k">public</span> <span class="k">class</span> color <span class="k">implements</span>  ActionListener {</div>
<div class="code" style="left:23px;top:125px;color:#787878">7</div>
<div class="code" style="left:44px;top:125px">        JFrame <span class="f">jf</span>;</div>
<div class="code" style="left:23px;top:145px;color:#787878">8</div>
<div class="code" style="left:44px;top:145px">        JButton <span class="f">jb</span>,<span class="f">jb1</span>,<span class="f">jb2</span>;</div>
<div class="code" style="left:23px;top:165px;color:#787878">9</div>
<div class="code" style="left:44px;top:165px">        JPanel <span class="f">jp</span>;</div>
<div class="code" style="left:14px;top:185px;color:#787878">10</div>
<div class="code" style="left:44px;top:185px">  <span class="k">public</span> color(){</div>
<div class="code" style="left:14px;top:205px;color:#787878">11</div>
<div class="code" style="left:44px;top:205px">      <span class="f">jf</span>=<span class="k">new</span> JFrame();</div>
<div class="code" style="left:14px;top:225px;color:#787878">12</div>
<div class="code" style="left:44px;top:225px">      <span class="f">jp</span>=<span class="k">new</span> JPanel();</div>
<div class="code" style="left:14px;top:245px;color:#787878">13</div>
<div class="code" style="left:44px;top:245px">      <span class="f">jb</span>=<span class="k">new</span> JButton(<span class="s">"<span style="display:inline-block;width:17px;font-size:16px;text-align:center;position:relative;top:-2px">红</span><span style="display:inline-block;width:17px;font-size:16px;text-align:center;position:relative;top:-2px">色</span>"</span>);</div>
<div class="code" style="left:14px;top:265px;color:#787878">14</div>
<div class="code" style="left:44px;top:265px">      <span class="f">jb</span>.addActionListener(<span class="k">new</span> ActionListener(){</div>
<div class="code" style="left:14px;top:285px;color:#787878">15</div>
<div class="code" style="left:44px;top:285px">         <span class="k">public</span> <span class="k">void</span> actionPerformed(ActionEvent <span class="p">e</span>){</div>
<div class="code" style="left:14px;top:305px;color:#787878">16</div>
<div class="code" style="left:44px;top:305px">             <span class="f">jp</span>.setBackground(Color.<span class="sf">red</span>);</div>
<div class="code" style="left:14px;top:325px;color:#787878">17</div>
<div class="code" style="left:44px;top:325px">         }</div>
<div class="code" style="left:14px;top:345px;color:#787878">18</div>
<div class="code" style="left:44px;top:345px">      });</div>
<div class="code" style="left:14px;top:365px;color:#787878">19</div>
<div class="code" style="left:44px;top:365px">      <span class="f">jb1</span>=<span class="k">new</span> JButton(<span class="s">"<span style="display:inline-block;width:17px;font-size:16px;text-align:center;position:relative;top:-2px">绿</span><span style="display:inline-block;width:17px;font-size:16px;text-align:center;position:relative;top:-2px">色</span>"</span>);</div>
<div class="code" style="left:14px;top:385px;color:#787878">20</div>
<div class="code" style="left:44px;top:385px">      <span class="f">jb1</span>.addActionListener(<span class="k">new</span> ActionListener(){</div>
<div class="code" style="left:14px;top:405px;color:#787878">21</div>
<div class="code" style="left:44px;top:405px">         <span class="k">public</span> <span class="k">void</span> actionPerformed(ActionEvent <span class="p">e</span>){</div>
<div class="code" style="left:14px;top:425px;color:#787878">22</div>
<div class="code" style="left:44px;top:425px">                 <span class="f">jp</span>.setBackground(Color.<span class="sf">green</span>);</div>
<div class="code" style="left:14px;top:445px;color:#787878">23</div>
<div class="code" style="left:44px;top:445px">             }</div>
<div class="code" style="left:14px;top:465px;color:#787878">24</div>
<div class="code" style="left:44px;top:465px">          });</div>
<div class="code" style="left:14px;top:485px;color:#787878">25</div>
<div class="code" style="left:44px;top:485px">      <span class="f">jb2</span>=<span class="k">new</span> JButton(<span class="s">"<span style="display:inline-block;width:17px;font-size:16px;text-align:center;position:relative;top:-2px">蓝</span><span style="display:inline-block;width:17px;font-size:16px;text-align:center;position:relative;top:-2px">色</span>"</span>);</div>
<div class="code" style="left:14px;top:505px;color:#787878">26</div>
<div class="code" style="left:44px;top:505px">      <span class="f">jb2</span>.addActionListener(<span class="k">new</span> ActionListener(){</div>
<div class="code" style="left:14px;top:525px;color:#787878">27</div>
<div class="code" style="left:44px;top:525px">         <span class="k">public</span> <span class="k">void</span> actionPerformed(ActionEvent <span class="p">e</span>){</div>
<div class="code" style="left:14px;top:545px;color:#787878">28</div>
<div class="code" style="left:44px;top:545px">             <span class="f">jp</span>.setBackground(Color.<span class="sf">BLUE</span>);</div>
<div class="code" style="left:14px;top:565px;color:#787878">29</div>
<div class="code" style="left:44px;top:565px">         }</div>
<div class="code" style="left:14px;top:585px;color:#787878">30</div>
<div class="code" style="left:44px;top:585px">      });</div>
<div class="code" style="left:14px;top:605px;color:#787878">31</div>
<div class="code" style="left:44px;top:605px">      <span class="f">jf</span>.add(<span class="f">jp</span>);</div>
<div class="code" style="left:14px;top:625px;color:#787878">32</div>
<div class="code" style="left:44px;top:625px">      <span class="f">jp</span>.add(<span class="f">jb</span>);</div>
<div class="code" style="left:14px;top:645px;color:#787878">33</div>
<div class="code" style="left:44px;top:645px">      <span class="f">jp</span>.add(<span class="f">jb1</span>);</div>
<div class="code" style="left:14px;top:665px;color:#787878">34</div>
<div class="code" style="left:44px;top:665px">      <span class="f">jp</span>.add(<span class="f">jb2</span>);</div>
<div class="code" style="left:14px;top:685px;color:#787878">35</div>
<div class="code" style="left:44px;top:685px">      <span class="f">jf</span>.setVisible(<span class="k">true</span>);</div>
<div class="code" style="left:14px;top:705px;color:#787878">36</div>
<div class="code" style="left:44px;top:705px">      <span class="f">jf</span>.setSize(300,300);;</div>
<div class="code" style="left:14px;top:725px;color:#787878">37</div>
<div class="code" style="left:44px;top:725px">      <span class="f">jb1</span>.setBounds(150,80,80,40);</div>
<div class="code" style="left:14px;top:745px;color:#787878">38</div>
<div class="code" style="left:44px;top:745px">      <span class="f">jf</span>.add(<span class="f">jb</span>,BorderLayout.<span class="sf">NORTH</span>);</div>
<svg style="left:32px;top:27px" width="10" height="10"><circle cx="5" cy="5" r="4.5" fill="#d8e6f2" stroke="#bccad8"/><path d="M2.5 5H7.5" stroke="#6a7a8a" stroke-width="1"/></svg>
<svg style="left:32px;top:187px" width="10" height="10"><circle cx="5" cy="5" r="4.5" fill="#d8e6f2" stroke="#bccad8"/><path d="M2.5 5H7.5" stroke="#6a7a8a" stroke-width="1"/></svg>
<svg style="left:32px;top:267px" width="10" height="10"><circle cx="5" cy="5" r="4.5" fill="#d8e6f2" stroke="#bccad8"/><path d="M2.5 5H7.5" stroke="#6a7a8a" stroke-width="1"/></svg>
<svg style="left:32px;top:287px" width="10" height="10"><circle cx="5" cy="5" r="4.5" fill="#d8e6f2" stroke="#bccad8"/><path d="M2.5 5H7.5" stroke="#6a7a8a" stroke-width="1"/></svg>
<svg style="left:32px;top:387px" width="10" height="10"><circle cx="5" cy="5" r="4.5" fill="#d8e6f2" stroke="#bccad8"/><path d="M2.5 5H7.5" stroke="#6a7a8a" stroke-width="1"/></svg>
<svg style="left:32px;top:407px" width="10" height="10"><circle cx="5" cy="5" r="4.5" fill="#d8e6f2" stroke="#bccad8"/><path d="M2.5 5H7.5" stroke="#6a7a8a" stroke-width="1"/></svg>
<svg style="left:32px;top:507px" width="10" height="10"><circle cx="5" cy="5" r="4.5" fill="#d8e6f2" stroke="#bccad8"/><path d="M2.5 5H7.5" stroke="#6a7a8a" stroke-width="1"/></svg>
<svg style="left:32px;top:527px" width="10" height="10"><circle cx="5" cy="5" r="4.5" fill="#d8e6f2" stroke="#bccad8"/><path d="M2.5 5H7.5" stroke="#6a7a8a" stroke-width="1"/></svg>
<svg style="left:3px;top:288px" width="11" height="7"><path d="M1 5.5H10L5.5 1Z" fill="#fff" stroke="#5a30c0" stroke-width="1.3"/></svg>
<svg style="left:3px;top:408px" width="11" height="7"><path d="M1 5.5H10L5.5 1Z" fill="#fff" stroke="#5a30c0" stroke-width="1.3"/></svg>
<svg style="left:3px;top:528px" width="11" height="7"><path d="M1 5.5H10L5.5 1Z" fill="#fff" stroke="#5a30c0" stroke-width="1.3"/></svg>
</div>
<div class="a" style="left:1590px;top:134px;width:19px;height:750px;background:#f0f0f0"></div>
<div class="a" style="left:1590px;top:155px;width:19px;height:475px;background:#cdcdcd"></div>
<svg style="left:1594px;top:141px" width="11" height="7" viewBox="0 0 11 7"><path d="M1 6L5.5 1.5L10 6" stroke="#606060" stroke-width="1.6" fill="none"/></svg>
<svg style="left:1594px;top:869px" width="11" height="7" viewBox="0 0 11 7"><path d="M1 1L5.5 5.5L10 1" stroke="#606060" stroke-width="1.6" fill="none"/></svg>
<div class="a" style="left:1609px;top:132px;width:17px;height:774px;background:#f8f8f8"></div>
<div class="a" style="left:1612px;top:733px;width:9px;height:5px;background:#a9d0f5;border:1px solid #3a8ee6"></div>
<div class="a" style="left:1612px;top:796px;width:9px;height:5px;background:#a9d0f5;border:1px solid #3a8ee6"></div>
<div class="a" style="left:331px;top:884px;width:42px;height:22px;background:#f8f8f8"></div>
<div class="a" style="left:373px;top:884px;width:1237px;height:22px;background:#eaeaea"></div>
<svg style="left:379px;top:889px" width="7" height="11" viewBox="0 0 7 11"><path d="M6 1L1.5 5.5L6 10" stroke="#b0b0b0" stroke-width="1.5" fill="none"/></svg>
<svg style="left:1574px;top:889px" width="7" height="11" viewBox="0 0 7 11"><path d="M1 1L5.5 5.5L1 10" stroke="#b0b0b0" stroke-width="1.5" fill="none"/></svg>
<div class="a" style="left:1633px;top:91px;width:285px;height:912px;background:#fff;border-radius:6px"></div>
<div class="a" style="left:1633px;top:91px;width:285px;height:29px;background:#f5f6fa;border-radius:6px 6px 0 0"></div>
<div class="a" style="left:1633px;top:91px;width:80px;height:29px;background:linear-gradient(#dde5ef,#f6f8fb 85%,#fff);border-radius:6px 6px 0 0"></div>
<svg style="left:1639px;top:99px" width="14" height="15" viewBox="0 0 14 15"><rect x="0.5" y="0.5" width="4.5" height="4.5" fill="#fff" stroke="#2a6ac0" stroke-width="1.2"/><rect x="0.5" y="9.5" width="4.5" height="4.5" fill="#fff" stroke="#2a6ac0" stroke-width="1.2"/><path d="M7 1.5H13M7 12.5H13M9 7H13" stroke="#2a6ac0" stroke-width="1.2"/><rect x="7" y="6" width="1.5" height="2" fill="#2a6ac0"/></svg>
<div class="t" style="left:1657px;top:97px;font-size:15px;letter-spacing:0px">大纲</div>
<svg style="left:1695px;top:100px" width="11" height="11" viewBox="0 0 11 11"><polygon points="0.5,0.5 3.5,0.5 5.25,2.5 7,0.5 10,0.5 10,3.5 8,5.25 10,7 10,10 7,10 5.25,8 3.5,10 0.5,10 0.5,7 2.5,5.25 0.5,3.5" fill="#fff" stroke="#555" stroke-width="1"/></svg>
<svg style="left:1719px;top:99px" width="13" height="14" viewBox="0 0 13 14"><rect x="0.5" y="2.5" width="12" height="11" fill="#f4f6fa" stroke="#a8b0c0"/><path d="M2 1L5 4" stroke="#3a5aa0"/><path d="M3 8H10" stroke="#e05050"/><path d="M3 10.5H10" stroke="#50a050"/></svg>
<div class="t" style="left:1736px;top:97px;font-size:15px;color:#8a8a8a;letter-spacing:0px">模板</div>
<svg style="left:1776px;top:99px" width="14" height="14" viewBox="0 0 14 14"><rect x="2.5" y="2.5" width="11" height="11" fill="#f4f0e0" stroke="#c0a870"/><path d="M0 8L3 11L8 5" stroke="#3a8ad8" stroke-width="1.5" fill="none"/><path d="M6 6H11M6 8.5H11" stroke="#a0a0b0"/></svg>
<div class="t" style="left:1796px;top:97px;font-size:15px;color:#8a8a8a;letter-spacing:0px">任务</div>
<div class="a" style="left:1871px;top:98px;width:10px;height:5px;background:#fff;border:1px solid #555"></div>
<div class="a" style="left:1894px;top:98px;width:11px;height:11px;background:#fff;border:1px solid #555;border-top-width:2px"></div>
<div class="a" style="left:1724px;top:122px;width:186px;height:22px;background:#f5f6fa"></div>
<svg style="left:1729px;top:126px" width="13" height="13" viewBox="0 0 13 13"><circle cx="4" cy="3.5" r="3" fill="#c8c8c8"/><circle cx="9.5" cy="6" r="3" fill="#b8b8b8"/><circle cx="4.5" cy="9.5" r="3" fill="#9a9a9a"/></svg>
<svg style="left:1752px;top:126px" width="14" height="14" viewBox="0 0 14 14"><rect x="0.5" y="0.5" width="10" height="10" fill="#dbe8f6" stroke="#8a9ab8"/><rect x="2.5" y="3" width="11" height="10.5" fill="#eef4fb" stroke="#8a9ab8"/><rect x="4.5" y="8" width="7" height="1.6" fill="#1a4a8a"/></svg>
<svg style="left:1772px;top:125px" width="17" height="17" viewBox="0 0 17 17"><path d="M2.5 1V15M0.5 12L2.5 15L4.5 12" stroke="#2a4a6a" stroke-width="1" fill="none"/><text x="5" y="8" font-size="10" font-weight="bold" fill="#2a8a6a" font-family="Liberation Sans">a</text><text x="9" y="17" font-size="10" font-weight="bold" fill="#a03a9a" font-family="Liberation Sans">z</text></svg>
<svg style="left:1797px;top:125px" width="16" height="16" viewBox="0 0 16 16"><circle cx="8" cy="8" r="5.5" fill="#3a8ad8"/><path d="M6.5 5.5H9.5A1.5 1.5 0 0 1 9.5 8.5H6.5V11" stroke="#fff" stroke-width="1.3" fill="none"/><path d="M1 1L15 15" stroke="#1a3a8a" stroke-width="1.3"/></svg>
<svg style="left:1820px;top:125px" width="16" height="16" viewBox="0 0 16 16"><circle cx="7" cy="9" r="3.5" fill="#8a8a8a"/><path d="M1 4L13 15" stroke="#1a3a8a" stroke-width="1.3"/><text x="10" y="7" font-size="8" font-weight="bold" fill="#2a5aa8" font-family="Liberation Sans">S</text></svg>
<svg style="left:1845px;top:128px" width="10" height="10" viewBox="0 0 10 10"><circle cx="5" cy="5" r="4" fill="#4aaa4a" stroke="#2a7a2a" stroke-width="0.8"/></svg>
<svg style="left:1865px;top:125px" width="16" height="16" viewBox="0 0 16 16"><circle cx="7" cy="9" r="3.5" fill="#8a8a8a"/><path d="M1 4L13 15" stroke="#1a3a8a" stroke-width="1.3"/><path d="M11 1V6H14" stroke="#2a5aa8" stroke-width="1.3" fill="none"/></svg>
<svg style="left:1897px;top:128px" width="11" height="6" viewBox="0 0 11 6"><path d="M0.5 0.5H10L5.2 5.5Z" fill="#fff" stroke="#555" stroke-width="1"/></svg>
<div class="a" style="left:1662px;top:144px;width:74px;height:23px;background:#d9d9d9"></div>
<svg style="left:1666px;top:148px" width="13" height="13" viewBox="0 0 13 13"><rect x="0.5" y="0.5" width="12" height="12" fill="#e8e4b0" stroke="#8a8a5a" stroke-width="0.8"/><path d="M6.5 0V13M0 6.5H13" stroke="#6a6a4a" stroke-width="1.2"/></svg>
<div class="t" style="left:1691px;top:145px;">demo</div>
<svg style="left:1646px;top:174px" width="8" height="12" viewBox="0 0 8 12"><path d="M1 1L6 6L1 11" stroke="#8a8a8a" stroke-width="1.4" fill="none"/></svg>
<svg style="left:1664px;top:170px" width="18" height="16" viewBox="0 0 18 16"><circle cx="6.5" cy="6.5" r="6" fill="#2e9a3a" stroke="#1e6e28"/><path d="M9 4.5A3 3 0 1 0 9 8.5" stroke="#fff" stroke-width="1.8" fill="none"/><path d="M13 11V16L17 13.5Z" fill="#3aa84a"/></svg>
<div class="t" style="left:1691px;top:169px;">color</div>
<div class="a" style="left:3px;top:912px;width:1624px;height:91px;background:#fff"></div>
<div class="a" style="left:3px;top:912px;width:1624px;height:30px;background:#f5f6fa"></div>
<div class="a" style="left:3px;top:912px;width:95px;height:30px;background:linear-gradient(#dde5ef,#f6f8fb 85%,#fff);border-radius:6px 6px 0 0"></div>
<svg style="left:10px;top:921px" width="14" height="13" viewBox="0 0 14 13"><rect x="0.8" y="0.8" width="12.4" height="9.4" rx="1.5" fill="#e8f0fa" stroke="#2f63b0" stroke-width="1.6"/><rect x="3.5" y="3.5" width="5" height="1.2" fill="#2f63b0"/><rect x="3.5" y="5.8" width="7" height="1.2" fill="#2f63b0"/><rect x="2.5" y="11" width="9" height="1.6" fill="#2f63b0"/></svg>
<div class="t" style="left:29px;top:919px;font-size:15px;letter-spacing:0px">控制台</div>
<svg style="left:81px;top:923px" width="11" height="11" viewBox="0 0 11 11"><polygon points="0.5,0.5 3.5,0.5 5.25,2.5 7,0.5 10,0.5 10,3.5 8,5.25 10,7 10,10 7,10 5.25,8 3.5,10 0.5,10 0.5,7 2.5,5.25 0.5,3.5" fill="#fff" stroke="#555" stroke-width="1"/></svg>
<svg style="left:104px;top:920px" width="15" height="15" viewBox="0 0 15 15"><path d="M0.5 0.5H7L10 3.5V13H0.5Z" fill="#f4f6fa" stroke="#c0b090"/><path d="M3 5Q2 7 3 9M5 6H8M5 8H8" stroke="#6a8ab8" stroke-width="0.8" fill="none"/><path d="M7 10H11V8L14 11L11 14V12H7Z" fill="#f9d070" stroke="#d0a040" stroke-width="0.6"/></svg>
<div class="t" style="left:122px;top:918px;font-size:15px;color:#8a8a8a;letter-spacing:0px">声明</div>
<svg style="left:184px;top:921px" width="16" height="13" viewBox="0 0 16 13"><rect x="0.5" y="0.5" width="10" height="3" fill="#9ab89a" stroke="#6a9a6a" stroke-width="0.6"/><rect x="0.5" y="5.5" width="7" height="3" fill="#9ab89a" stroke="#6a9a6a" stroke-width="0.6"/><circle cx="11" cy="8.5" r="4" fill="#3aaa4a"/><path d="M9.5 6.5V10.5L12.5 8.5Z" fill="#fff"/></svg>
<div class="t" style="left:201px;top:918px;font-size:15px;color:#8a8a8a;letter-spacing:0px">进度</div>
<svg style="left:260px;top:920px" width="16" height="15" viewBox="0 0 16 15"><path d="M1 14L10 4L13 7L4 15Z" fill="#efd8a0" stroke="#c9a860" stroke-width="0.8"/><path d="M10 4L13 1L15 3L13 7Z" fill="#e6c070" stroke="#c9a860" stroke-width="0.8"/><path d="M3 10L6 13" stroke="#a8a8a8" stroke-width="2"/></svg>
<div class="t" style="left:280px;top:918px;font-size:15px;color:#8a8a8a;letter-spacing:0px">搜索</div>
<svg style="left:1316px;top:919px" width="13" height="13" viewBox="0 0 13 13"><rect x="0.5" y="0.5" width="12" height="12" rx="1.5" fill="#e83030" stroke="#b81a1a"/></svg>
<svg style="left:1338px;top:919px" width="14" height="13" viewBox="0 0 14 13"><path d="M2 2L12 11M12 2L2 11" stroke="#8a8a8a" stroke-width="3.5"/></svg>
<svg style="left:1361px;top:918px" width="16" height="15" viewBox="0 0 16 15"><path d="M2 5L12 14M12 5L2 14" stroke="#a8a8a8" stroke-width="3.5"/><path d="M5 1L14 9M14 1L9 5" stroke="#b8b8b8" stroke-width="2"/></svg>
<div class="a" style="left:1382px;top:915px;width:1px;height:20px;background:#7a7a7a"></div>
<svg style="left:1392px;top:918px" width="15" height="15" viewBox="0 0 15 15"><path d="M0.5 0.5H8L11 3.5V13H0.5Z" fill="#f4f4f0" stroke="#8a8a7a"/><path d="M2.5 4H7M2.5 6.5H8M2.5 9H6" stroke="#7a8ab0"/><path d="M9 9L14 14M14 9L9 14" stroke="#555" stroke-width="1.5"/></svg>
<svg style="left:1415px;top:918px" width="15" height="15" viewBox="0 0 15 15"><rect x="6.5" y="0.5" width="7" height="14" fill="#f4f4f0" stroke="#8a8a7a"/><path d="M8 3H12M8 6H12M8 9H12" stroke="#7a8ab0"/><rect x="0.5" y="7.5" width="6" height="6" fill="#e8b030" stroke="#a87a10"/><path d="M1.5 7.5V5A2 2 0 0 1 5.5 5V7.5" stroke="#a87a10" fill="none"/></svg>
<svg style="left:1438px;top:918px" width="15" height="15" viewBox="0 0 15 15"><rect x="0.5" y="0.5" width="10" height="12" fill="#f4f4ee" stroke="#c8b890"/><path d="M2.5 3H8M2.5 5.5H7M2.5 8H6" stroke="#8aaad0"/><path d="M13 4V10H7M9 8L7 10L9 12" stroke="#e8c060" stroke-width="2" fill="none"/></svg>
<div class="a" style="left:1458px;top:914px;width:24px;height:22px;background:#cce4f7;border:1px solid #99c9ef"></div>
<div class="a" style="left:1482px;top:914px;width:23px;height:22px;background:#cce4f7;border:1px solid #99c9ef"></div>
<svg style="left:1461px;top:917px" width="17" height="16" viewBox="0 0 17 16"><rect x="4.5" y="0.5" width="12" height="9" fill="#fff" stroke="#3a6ab0"/><path d="M7 3.5H14M7 6H12" stroke="#3a6ab0"/><rect x="0.5" y="4.5" width="9" height="7" fill="#e8f0fa" stroke="#3a6ab0"/><path d="M3 14H7M5 11.5V14" stroke="#3a6ab0" stroke-width="1.3"/></svg>
<svg style="left:1485px;top:917px" width="17" height="16" viewBox="0 0 17 16"><rect x="4.5" y="0.5" width="12" height="9" fill="#fff" stroke="#3a6ab0"/><path d="M8 2.5L11 5.5M11 2.5L8 5.5" stroke="#e03030" stroke-width="1.3"/><path d="M12 4H15M12 6H15" stroke="#3a6ab0"/><rect x="0.5" y="4.5" width="9" height="7" fill="#e8f0fa" stroke="#3a6ab0"/><path d="M3 14H7M5 11.5V14" stroke="#3a6ab0" stroke-width="1.3"/></svg>
<div class="a" style="left:1509px;top:915px;width:1px;height:20px;background:#7a7a7a"></div>
<svg style="left:1515px;top:917px" width="16" height="16" viewBox="0 0 16 16"><rect x="0.5" y="4.5" width="13" height="11" fill="#eef4fb" stroke="#3a6ab0"/><rect x="1" y="5" width="12" height="2.5" fill="#3b8fd8"/><path d="M7 10L14 3" stroke="#2a8a3a" stroke-width="2"/><circle cx="13.5" cy="3" r="2.5" fill="#3aaa4a"/></svg>
<svg style="left:1539px;top:918px" width="14" height="14" viewBox="0 0 14 14"><rect x="0.8" y="0.8" width="12.4" height="9.4" rx="1.5" fill="#e8f0fa" stroke="#2f63b0" stroke-width="1.6"/><rect x="3.5" y="3.5" width="5" height="1.2" fill="#2f63b0"/><rect x="3.5" y="5.8" width="7" height="1.2" fill="#2f63b0"/><rect x="2.5" y="11" width="9" height="1.6" fill="#2f63b0"/></svg>
<svg style="left:1562px;top:922px" width="10" height="6" viewBox="0 0 10 6"><path d="M0 0H9L4.5 5Z" fill="#111"/></svg>
<svg style="left:1580px;top:916px" width="16" height="17" viewBox="0 0 16 17"><rect x="0.5" y="3.5" width="12" height="12" fill="#fff" stroke="#8a7a4a"/><rect x="1" y="4" width="11" height="2.5" fill="#3b8fd8"/><path d="M12 0 L13.5 2.5 L16 3 L13.5 4.5 L12 7 L10.5 4.5 L8 3 L10.5 2.5Z" fill="#f6d15e" stroke="#b68b2a" stroke-width="0.7"/></svg>
<svg style="left:1605px;top:922px" width="10" height="6" viewBox="0 0 10 6"><path d="M0 0H9L4.5 5Z" fill="#111"/></svg>
<div class="t" style="left:7px;top:945px;letter-spacing:-0.07px">color [Java 应用程序] C:\Program Files\Java\jre1.8.0_131\bin\javaw.exe  (2019年5月26日 下午2:03:57)</div>
<div class="a" style="left:7px;top:964px;width:1615px;height:1px;background:#8a8a8a"></div>
<div class="a" style="left:1603px;top:965px;width:19px;height:14px;background:#f4f4f4"></div>
<svg style="left:1609px;top:969px" width="8" height="9" viewBox="0 0 8 9"><path d="M2.5 2.5L4 1L5.5 2.5Z" fill="#333"/><rect x="0" y="7" width="1.5" height="1.5" fill="#333"/><rect x="6" y="7" width="1.5" height="1.5" fill="#333"/></svg>
<div class="a" style="left:7px;top:979px;width:1615px;height:20px;background:#eaeaea"></div>
<svg style="left:12px;top:984px" width="7" height="11" viewBox="0 0 7 11"><path d="M6 1L1.5 5.5L6 10" stroke="#b0b0b0" stroke-width="1.5" fill="none"/></svg>
<svg style="left:1590px;top:984px" width="7" height="11" viewBox="0 0 7 11"><path d="M1 1L5.5 5.5L1 10" stroke="#b0b0b0" stroke-width="1.5" fill="none"/></svg>
<div class="a" style="left:0px;top:1004px;width:1920px;height:26px;background:#dfe4f3"></div>
<div class="a" style="left:1px;top:1003px;width:1628px;height:1px;background:#a6a6ae"></div>
<div class="a" style="left:1258px;top:1004px;width:1px;height:22px;background:#9a9a9a"></div>
<div class="a" style="left:1259px;top:1004px;width:1px;height:22px;background:#fff"></div>
<div class="t" style="left:1266px;top:1005px;letter-spacing:0px;font-size:15px">可写</div>
<div class="a" style="left:1377px;top:1004px;width:1px;height:22px;background:#9a9a9a"></div>
<div class="a" style="left:1378px;top:1004px;width:1px;height:22px;background:#fff"></div>
<div class="t" style="left:1384px;top:1005px;letter-spacing:0px;font-size:15px">智能插入</div>
<div class="a" style="left:1489px;top:1004px;width:1px;height:22px;background:#9a9a9a"></div>
<div class="a" style="left:1490px;top:1004px;width:1px;height:22px;background:#fff"></div>
<div class="t" style="left:1497px;top:1005px;letter-spacing:0.3px;font-size:15px">1 : 14</div>
<svg style="left:1599px;top:1009px" width="3" height="18" viewBox="0 0 3 18"><rect x="0" y="0" width="2" height="2.5" fill="#a89f85"/><rect x="0" y="5" width="2" height="2.5" fill="#a89f85"/><rect x="0" y="10" width="2" height="2.5" fill="#a89f85"/><rect x="0" y="15" width="2" height="2.5" fill="#a89f85"/></svg>
<div class="a" style="left:1201px;top:102px;width:284px;height:292px;box-shadow:4px 5px 18px 3px rgba(0,0,0,0.26);background:#00ff00;border:1px solid #dcd0e0;border-top:none"></div>
<div class="a" style="left:1201px;top:102px;width:283px;height:38px;background:#fff;border:1px solid #c8c8c8;border-bottom:none"></div>
<svg style="left:1211px;top:111px" width="20" height="19" viewBox="0 0 20 19"><rect x="0.5" y="0.5" width="19" height="18" rx="2.5" fill="#f2f4f6" stroke="#6a8098"/><path d="M10 2.5Q7 5 9 7.5Q10 9 9.5 10M11.5 4Q10 6 11.5 8" stroke="#e8803a" stroke-width="1.4" fill="none"/><path d="M5.5 10.5H13.5Q13 14 9.5 14Q6 14 5.5 10.5ZM13.5 11Q15.5 11 14.5 12.5" stroke="#6a8aa8" stroke-width="1.1" fill="#c8d4e0"/><path d="M3.5 15.5Q9.5 17.5 15.5 15.5" stroke="#6a8aa8" stroke-width="1.1" fill="none"/></svg>
<div class="a" style="left:1331px;top:120px;width:12px;height:1px;background:#111"></div>
<div class="a" style="left:1389px;top:115px;width:12px;height:12px;border:1px solid #111"></div>
<svg style="left:1448px;top:115px" width="13" height="13" viewBox="0 0 13 13"><path d="M0.5 0.5L12.5 12.5M12.5 0.5L0.5 12.5" stroke="#111" stroke-width="1.1"/></svg>
<div class="a" style="left:1201px;top:140px;width:283px;height:28px;background:linear-gradient(#e2eaf4 0%,#ffffff 35%,#e0e9f4 60%,#c6d6ea 100%);border:1px solid #7a8a99"></div>
<div class="t" style="left:1330px;top:145px;font-size:13px;font-weight:bold;color:#222;letter-spacing:0px">蓝色</div>
<div class="a" style="left:1215px;top:145px;width:60px;height:28px;background:linear-gradient(#e2eaf4 0%,#ffffff 35%,#e0e9f4 60%,#c6d6ea 100%);border:1px solid #7a8a99"></div>
<div class="t" style="left:1232px;top:150px;font-size:13px;font-weight:bold;color:#222;letter-spacing:0px">红色</div>
<div class="a" style="left:1352px;top:220px;width:80px;height:40px;background:linear-gradient(#e2eaf4 0%,#ffffff 35%,#e0e9f4 60%,#c6d6ea 100%);border:1px solid #7a8a99"></div>
<div class="a" style="left:1378px;top:230px;width:28px;height:20px;border:1px solid #a8b8c8"></div>
<div class="t" style="left:1379px;top:230px;font-size:13px;font-weight:bold;color:#222;letter-spacing:0px">绿色</div>
</body></html>
